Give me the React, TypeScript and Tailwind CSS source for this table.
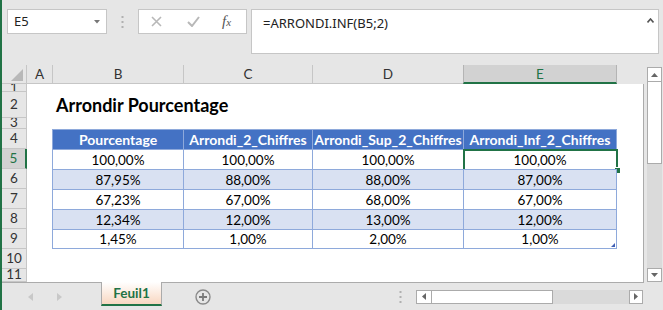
import React from 'react';

const headers = ['Pourcentage', 'Arrondi_2_Chiffres', 'Arrondi_Sup_2_Chiffres', 'Arrondi_Inf_2_Chiffres'];

const values = [
  ['100,00%', '100,00%', '100,00%', '100,00%'],
  ['87,95%', '88,00%', '88,00%', '87,00%'],
  ['67,23%', '67,00%', '68,00%', '67,00%'],
  ['12,34%', '12,00%', '13,00%', '12,00%'],
  ['1,45%', '1,00%', '2,00%', '1,00%'],
];

// widths of columns B..E
const colW = ['w-[131px]', 'w-[129px]', 'w-[151px]', 'w-[154px]'];
const letters = ['B', 'C', 'D', 'E'];

const FormulaBar = () => (
  <div className="h-[65px] shrink-0 flex items-start pt-[9px] pl-[5px] font-['Noto_Sans',sans-serif] text-[13px] text-[#222]">
    {/* name box */}
    <div className="w-[100px] h-[25px] bg-white border border-[#c6c6c6] flex items-center justify-between pl-[6px] pr-[6px]">
      <span className="leading-none">E5</span>
      <svg width="6" height="4" viewBox="0 0 6 4">
        <polygon points="0,0 6,0 3,3.5" fill="#777" />
      </svg>
    </div>
    <div className="w-[31px] h-[25px] flex items-center justify-center">
      <svg width="3" height="12" viewBox="0 0 3 12">
        <rect x="0.5" y="0" width="2" height="2" fill="#b0b0b0" />
        <rect x="0.5" y="5" width="2" height="2" fill="#b0b0b0" />
        <rect x="0.5" y="10" width="2" height="2" fill="#b0b0b0" />
      </svg>
    </div>
    {/* cancel / enter / insert function */}
    <div className="w-[109px] h-[25px] bg-white border border-[#c6c6c6] flex items-center pl-[12px]">
      <svg width="11" height="11" viewBox="0 0 11 11">
        <path d="M1 1 L10 10 M10 1 L1 10" stroke="#b8b8b8" strokeWidth="1.6" />
      </svg>
      <svg className="ml-[25px]" width="13" height="11" viewBox="0 0 13 11">
        <path d="M1 6 L5 10 L12 1" stroke="#b8b8b8" strokeWidth="2" fill="none" />
      </svg>
      <span className="ml-[22px] font-['Liberation_Serif',serif] italic text-[15px] text-[#555] leading-none">
        f<span className="text-[11px]">x</span>
      </span>
    </div>
    <div className="ml-[4px] w-[408px] h-[45px] bg-white border border-[#c6c6c6] flex items-start justify-between pl-[11px] pr-[4px]">
      <span className="mt-[4px] leading-[18px]">=ARRONDI.INF(B5;2)</span>
      <svg className="mt-[8px]" width="7" height="5" viewBox="0 0 7 5">
        <path d="M0.5 4.5 L3.5 1 L6.5 4.5" stroke="#555" strokeWidth="1.6" fill="none" />
      </svg>
    </div>
  </div>
);

const ColumnHeaders = () => (
  <div className="h-[19px] shrink-0 flex text-[13.5px] text-[#333]">
    <div className="w-[25px] shrink-0 border-r border-b border-[#c6c6c6] flex items-end justify-end pr-[3px] pb-[2px]">
      <svg width="12" height="12" viewBox="0 0 12 12">
        <polygon points="12,0 12,12 0,12" fill="#b8b8b8" />
      </svg>
    </div>
    <div className="w-[25px] shrink-0 border-b border-[#c6c6c6] flex items-center justify-center">A</div>
    {letters.map((l, i) =>
      l === 'E' ? (
        <div
          key={l}
          className={`${colW[i]} shrink-0 bg-[#d2d2d2] text-[#217346] border-l border-r border-[#b4b4b4] border-b-2 border-b-[#217346] flex items-center justify-center pt-[1px]`}
        >
          {l}
        </div>
      ) : (
        <div key={l} className={`${colW[i]} shrink-0 border-l border-b border-[#c6c6c6] flex items-center justify-center`}>
          {l}
        </div>
      )
    )}
  </div>
);

const RowHeader = ({ label, active }: { label: string; active?: boolean }) => (
  <div
    className={`w-[25px] shrink-0 h-full overflow-hidden flex items-center justify-center text-[13.5px] leading-none border-b border-[#c6c6c6] ${
      active ? 'bg-[#d2d2d2] text-[#217346] border-r-2 border-r-[#217346]' : 'bg-[#e6e6e6] text-[#333] border-r border-r-[#c6c6c6]'
    }`}
  >
    {label}
  </div>
);

const SheetRow = ({ label, h, active, children }: { label: string; h: string; active?: boolean; children?: React.ReactNode }) => (
  <div className={`flex shrink-0 ${h}`}>
    <RowHeader label={label} active={active} />
    <div className="w-[25px] shrink-0" />
    {children}
  </div>
);

const TableCells = ({ cells, kind, last, row }: { cells: string[]; kind: 'head' | 'band' | 'plain'; last?: boolean; row?: number }) => (
  <>
    {cells.map((c, i) => (
      <div
        key={i}
        className={`${colW[i]} shrink-0 relative flex items-center justify-center border-l border-t border-[#8ea9db] ${i === 3 ? 'border-r' : ''} ${
          last ? 'border-b' : ''
        } ${
          kind === 'head'
            ? 'bg-[#4472c4] text-white font-bold text-[14px]'
            : kind === 'band'
            ? 'bg-[#d9e1f2] text-black text-[13.5px] pt-[1px]'
            : 'bg-white text-black text-[13.5px] pt-[1px]'
        }`}
      >
        {c}
        {row === 0 && i === 3 && (
          <>
            {/* active cell frame with fill handle */}
            <div className="absolute -left-[1px] -top-[1px] w-[155px] h-[22px] border-2 border-[#217346]" />
            <div className="absolute left-[150px] top-[17px] w-[7px] h-[7px] bg-[#217346] border border-white" />
          </>
        )}
        {last && i === 3 && (
          <svg className="absolute right-[1px] bottom-[1px]" width="4" height="4" viewBox="0 0 4 4">
            <polygon points="4,0 4,4 0,4" fill="#3f5fb5" />
          </svg>
        )}
      </div>
    ))}
  </>
);

const VScroll = () => (
  <div className="ml-[3px] w-[15px] shrink-0 flex flex-col pt-[2px]">
    <div className="h-[15px] bg-white border border-[#ababab] flex items-center justify-center">
      <svg width="7" height="4" viewBox="0 0 7 4">
        <polygon points="0,4 7,4 3.5,0" fill="#666" />
      </svg>
    </div>
    <div className="h-[82px] bg-white border-x border-b border-[#ababab]" />
    <div className="h-[104px] bg-[#dadada]" />
    <div className="h-[14px] bg-white border border-[#ababab] flex items-center justify-center">
      <svg width="7" height="4" viewBox="0 0 7 4">
        <polygon points="0,0 7,0 3.5,4" fill="#666" />
      </svg>
    </div>
  </div>
);

const HScroll = () => (
  <div className="ml-[14px] w-[227px] h-[14px] flex">
    <div className="w-[16px] h-full bg-white border border-[#ababab] flex items-center justify-center">
      <svg width="4" height="7" viewBox="0 0 4 7">
        <polygon points="4,0 4,7 0,3.5" fill="#666" />
      </svg>
    </div>
    <div className="w-[121px] h-full bg-white border-y border-r border-[#ababab]" />
    <div className="flex-1 h-full bg-[#dadada]" />
    <div className="w-[14px] h-full bg-white border border-[#ababab] flex items-center justify-center">
      <svg width="4" height="7" viewBox="0 0 4 7">
        <polygon points="0,0 0,7 4,3.5" fill="#666" />
      </svg>
    </div>
  </div>
);

const TabBar = () => (
  <div className="h-[28px] shrink-0 flex">
    <div className="w-[99px] shrink-0 border-t border-[#ababab] flex items-center pl-[26px]">
      <svg width="5" height="8" viewBox="0 0 5 8">
        <polygon points="5,0 5,8 0,4" fill="#c8c8c8" />
      </svg>
      <svg className="ml-[24px]" width="5" height="8" viewBox="0 0 5 8">
        <polygon points="0,0 0,8 5,4" fill="#c8c8c8" />
      </svg>
    </div>
    <div className="w-[61px] h-[24px] shrink-0 border-l border-r border-[#ababab] border-b-2 border-b-[#217346] bg-linear-to-b from-white to-[#f8d7c1] flex items-center justify-center pt-[1px] font-bold text-[13.5px] text-[#217346]">
      Feuil1
    </div>
    <div className="w-[482px] shrink-0 border-t border-[#ababab] flex items-center">
      <svg className="ml-[33px]" width="16" height="16" viewBox="0 0 16 16">
        <circle cx="8" cy="8" r="7" stroke="#8a8a8a" strokeWidth="1.4" fill="none" />
        <path d="M8 4 V12 M4 8 H12" stroke="#7a7a7a" strokeWidth="1.8" />
      </svg>
      <svg className="ml-[188px]" width="3" height="12" viewBox="0 0 3 12">
        <rect x="0.5" y="0" width="2" height="2" fill="#b0b0b0" />
        <rect x="0.5" y="5" width="2" height="2" fill="#b0b0b0" />
        <rect x="0.5" y="10" width="2" height="2" fill="#b0b0b0" />
      </svg>
      <HScroll />
    </div>
  </div>
);

export default function App() {
  return (
    <div className="w-[663px] h-[310px] overflow-hidden bg-[#e6e6e6] border-l-2 border-[#217346] flex flex-col font-['Lato',sans-serif] text-[#222]">
      <FormulaBar />
      <div className="flex h-[217px] shrink-0">
        <div className="w-[642px] shrink-0 flex flex-col">
          <ColumnHeaders />
          <div className="h-[198px] bg-white border-r border-[#ababab] flex flex-col overflow-hidden">
            <SheetRow label="1" h="h-[8px]" />
            <SheetRow label="2" h="h-[26px]">
              <div className="pl-[4px] flex items-center pt-[1px] font-bold text-[18px] text-black whitespace-nowrap">
                Arrondir Pourcentage
              </div>
            </SheetRow>
            <SheetRow label="3" h="h-[11px]" />
            <SheetRow label="4" h="h-[20px]">
              <TableCells cells={headers} kind="head" />
            </SheetRow>
            {values.map((r, i) => (
              <SheetRow key={i} label={String(i + 5)} h="h-[20px]" active={i === 0}>
                <TableCells cells={r} kind={i % 2 === 1 ? 'band' : 'plain'} last={i === values.length - 1} row={i} />
              </SheetRow>
            ))}
            <SheetRow label="10" h="h-[20px]" />
            <SheetRow label="11" h="h-[13px]" />
          </div>
        </div>
        <VScroll />
      </div>
      <TabBar />
    </div>
  );
}
